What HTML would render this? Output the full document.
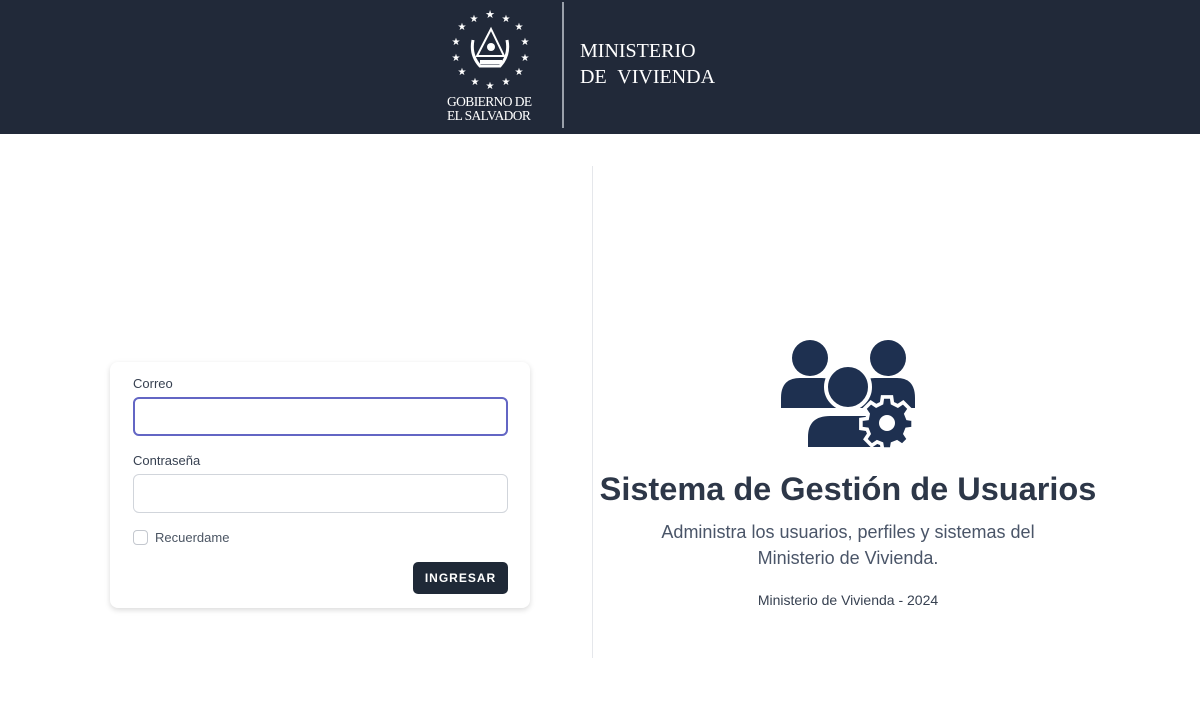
<!DOCTYPE html>
<html><head><meta charset="utf-8"><style>
*{box-sizing:border-box;margin:0;padding:0}
body{width:1200px;height:720px;background:#fff;font-family:"Liberation Sans","DejaVu Sans",sans-serif;position:relative;overflow:hidden}
.hdr{position:absolute;left:0;top:0;width:1200px;height:134px;background:#212939}
.serif{font-family:"Liberation Serif",serif;color:#fff;position:absolute;white-space:nowrap}
.card{position:absolute;left:110px;top:362px;width:420px;height:246px;background:#fff;border-radius:8px;box-shadow:0 2px 6px rgba(0,0,0,.15)}
.lbl{position:absolute;left:23px;font-size:13px;color:#374151}
.inp{position:absolute;left:23px;width:375px;height:39px;border:1px solid #d1d5db;border-radius:6px}
.btn{position:absolute;left:303px;top:200px;width:95px;height:32px;background:#1f2937;border-radius:5px;color:#fff;font-size:12px;font-weight:bold;letter-spacing:1px;text-align:center;line-height:32px}
.c{position:absolute;left:593px;width:510px;text-align:center}
</style></head><body>
<div class="hdr">
<svg width="120" height="95" style="position:absolute;left:430px;top:0" viewBox="430 0 120 95">
<g fill="#fff">
<text x="490" y="18" font-size="11" text-anchor="middle">★</text>
<text x="474" y="22" font-size="10" text-anchor="middle">★</text>
<text x="506" y="22" font-size="10" text-anchor="middle">★</text>
<text x="462" y="30" font-size="10" text-anchor="middle">★</text>
<text x="519" y="30" font-size="10" text-anchor="middle">★</text>
<text x="456" y="45" font-size="10" text-anchor="middle">★</text>
<text x="525" y="45" font-size="10" text-anchor="middle">★</text>
<text x="456" y="61" font-size="10" text-anchor="middle">★</text>
<text x="525" y="61" font-size="10" text-anchor="middle">★</text>
<text x="462" y="75" font-size="10" text-anchor="middle">★</text>
<text x="519" y="75" font-size="10" text-anchor="middle">★</text>
<text x="475" y="85" font-size="10" text-anchor="middle">★</text>
<text x="506" y="85" font-size="10" text-anchor="middle">★</text>
<text x="490" y="89" font-size="10" text-anchor="middle">★</text>
<path d="M491 29 L504 56 L477 56 Z" fill="none" stroke="#fff" stroke-width="2"/>
<path d="M473 40 Q470 55 480 66 L500 66 Q510 55 507 40" fill="none" stroke="#fff" stroke-width="3"/>
<circle cx="491" cy="47" r="4"/>
<rect x="480" y="60" width="22" height="4"/>
</g></svg>
<div class="serif" style="left:447px;top:94px;font-size:13.5px;letter-spacing:-.6px">GOBIERNO DE</div>
<div class="serif" style="left:447px;top:108px;font-size:13.5px;letter-spacing:-.6px">EL SALVADOR</div>
<div style="position:absolute;left:562px;top:2px;width:2px;height:126px;background:#9aa0aa"></div>
<div class="serif" style="left:580px;top:40px;font-size:20px">MINISTERIO</div>
<div class="serif" style="left:580px;top:66px;font-size:20px;word-spacing:6px">DE VIVIENDA</div>
</div>

<div class="card">
<div class="lbl" style="top:14px">Correo</div>
<div class="inp" style="top:35px;border:2px solid #6366c4"></div>
<div class="lbl" style="top:91px">Contraseña</div>
<div class="inp" style="top:112px"></div>
<div style="position:absolute;left:23px;top:168px;width:15px;height:15px;border:1px solid #c4c8cf;border-radius:4px"></div>
<div style="position:absolute;left:45px;top:168px;font-size:13px;color:#4b5563">Recuerdame</div>
<div class="btn">INGRESAR</div>
</div>

<div style="position:absolute;left:592px;top:166px;width:1px;height:492px;background:#e5e7eb"></div>

<svg width="150" height="120" style="position:absolute;left:775px;top:335px" viewBox="775 335 150 120">
<g fill="#1e3050" stroke="#fff" stroke-width="4">
<circle cx="810" cy="358" r="18" stroke="none"/>
<circle cx="888" cy="358" r="18" stroke="none"/>
<path d="M781 408 L781 398 Q781 378 800 378 L822 378 Q838 378 840 395 L840 408 Z" stroke="none"/>
<path d="M855 395 Q858 378 875 378 L897 378 Q915 378 915 398 L915 408 L855 408 Z" stroke="none"/>
<circle cx="848" cy="387" r="22"/>
<path d="M806 449 L806 437 Q806 414 830 414 L866 414 Q880 414 886 424 L886 449 Z"/>
<g transform="translate(887,423)">
<path d="M-5 -25 L5 -25 L6 -18 L12 -15 L18 -19 L25 -12 L21 -6 L23 -1 L29 0 L29 10 L22 11 L20 16 L24 22 L17 29 L11 25 L6 27 L5 33 L-5 33 L-6 27 L-11 25 L-17 29 L-24 22 L-20 16 L-22 11 L-29 10 L-29 0 L-22 -1 L-21 -6 L-25 -12 L-18 -19 L-12 -15 L-6 -18 Z" transform="scale(0.9) translate(0,-4)"/>
<circle cx="0" cy="0" r="8" fill="#fff" stroke="none"/>
</g>
</g></svg>

<div class="c" style="top:471px;font-size:32.5px;font-weight:bold;color:#2d3748">Sistema de Gestión de Usuarios</div>
<div class="c" style="top:519px;font-size:18px;line-height:26px;color:#4a5568">Administra los usuarios, perfiles y sistemas del<br>Ministerio de Vivienda.</div>
<div class="c" style="top:592px;font-size:14px;color:#374151">Ministerio de Vivienda - 2024</div>
</body></html>
